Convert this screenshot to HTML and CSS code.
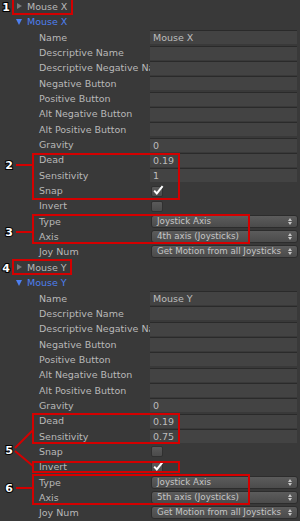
FILE: index.html
```html
<html lang="en">
<head>
    <meta charset="UTF-8">
    <meta name="viewport" content="width=device-width, initial-scale=1.0">
    <title>Input Manager</title>
    <link rel="stylesheet" href="styles.css">
</head>
<body>
    <div class="inspector">
        <!-- Mouse X -->
        <div class="row foldout"><span class="arrow closed"></span>Mouse X</div>
        <div class="row foldout open"><span class="arrow down"></span>Mouse X</div>
        <div class="row"><span class="label">Name</span><span class="field">Mouse X</span></div>
        <div class="row"><span class="label">Descriptive Name</span><span class="field"></span></div>
        <div class="row"><span class="label">Descriptive Negative Name</span><span class="field"></span></div>
        <div class="row"><span class="label">Negative Button</span><span class="field"></span></div>
        <div class="row"><span class="label">Positive Button</span><span class="field"></span></div>
        <div class="row"><span class="label">Alt Negative Button</span><span class="field"></span></div>
        <div class="row"><span class="label">Alt Positive Button</span><span class="field"></span></div>
        <div class="row"><span class="label">Gravity</span><span class="field">0</span></div>
        <div class="row"><span class="label">Dead</span><span class="field">0.19</span></div>
        <div class="row"><span class="label">Sensitivity</span><span class="field">1</span></div>
        <div class="row"><span class="label">Snap</span><span class="check on"><svg viewBox="0 0 12 11" width="12" height="11"><path d="M2.2 5.6 L4.8 8.4 L10.6 1.2" fill="none" stroke="#fff" stroke-width="2"/></svg></span></div>
        <div class="row"><span class="label">Invert</span><span class="check"></span></div>
        <div class="row"><span class="label">Type</span><span class="popup">Joystick Axis<svg class="updown" viewBox="0 0 4 7" width="4" height="7"><path d="M0 3 L2 0 L4 3 Z M0 4 L2 7 L4 4 Z" fill="#c8c8c8"/></svg></span></div>
        <div class="row"><span class="label">Axis</span><span class="popup">4th axis (Joysticks)<svg class="updown" viewBox="0 0 4 7" width="4" height="7"><path d="M0 3 L2 0 L4 3 Z M0 4 L2 7 L4 4 Z" fill="#c8c8c8"/></svg></span></div>
        <div class="row"><span class="label">Joy Num</span><span class="popup">Get Motion from all Joysticks<svg class="updown" viewBox="0 0 4 7" width="4" height="7"><path d="M0 3 L2 0 L4 3 Z M0 4 L2 7 L4 4 Z" fill="#c8c8c8"/></svg></span></div>

        <!-- Mouse Y -->
        <div class="row foldout"><span class="arrow closed"></span>Mouse Y</div>
        <div class="row foldout open"><span class="arrow down"></span>Mouse Y</div>
        <div class="row"><span class="label">Name</span><span class="field">Mouse Y</span></div>
        <div class="row"><span class="label">Descriptive Name</span><span class="field"></span></div>
        <div class="row"><span class="label">Descriptive Negative Name</span><span class="field"></span></div>
        <div class="row"><span class="label">Negative Button</span><span class="field"></span></div>
        <div class="row"><span class="label">Positive Button</span><span class="field"></span></div>
        <div class="row"><span class="label">Alt Negative Button</span><span class="field"></span></div>
        <div class="row"><span class="label">Alt Positive Button</span><span class="field"></span></div>
        <div class="row"><span class="label">Gravity</span><span class="field">0</span></div>
        <div class="row"><span class="label">Dead</span><span class="field">0.19</span></div>
        <div class="row"><span class="label">Sensitivity</span><span class="field">0.75</span></div>
        <div class="row"><span class="label">Snap</span><span class="check"></span></div>
        <div class="row"><span class="label">Invert</span><span class="check on"><svg viewBox="0 0 12 11" width="12" height="11"><path d="M2.2 5.6 L4.8 8.4 L10.6 1.2" fill="none" stroke="#fff" stroke-width="2"/></svg></span></div>
        <div class="row"><span class="label">Type</span><span class="popup">Joystick Axis<svg class="updown" viewBox="0 0 4 7" width="4" height="7"><path d="M0 3 L2 0 L4 3 Z M0 4 L2 7 L4 4 Z" fill="#c8c8c8"/></svg></span></div>
        <div class="row"><span class="label">Axis</span><span class="popup">5th axis (Joysticks)<svg class="updown" viewBox="0 0 4 7" width="4" height="7"><path d="M0 3 L2 0 L4 3 Z M0 4 L2 7 L4 4 Z" fill="#c8c8c8"/></svg></span></div>
        <div class="row"><span class="label">Joy Num</span><span class="popup">Get Motion from all Joysticks<svg class="updown" viewBox="0 0 4 7" width="4" height="7"><path d="M0 3 L2 0 L4 3 Z M0 4 L2 7 L4 4 Z" fill="#c8c8c8"/></svg></span></div>
    </div>

    <!-- red callouts drawn over the inspector -->
    <svg class="callouts" viewBox="0 0 300 521" width="300" height="521">
        <g fill="none" stroke="#d40000" stroke-width="2">
            <rect x="13" y="-1" width="59" height="15"/>
            <rect x="33" y="154" width="146" height="45"/>
            <rect x="33" y="215" width="216" height="28"/>
            <rect x="13" y="260" width="58" height="14"/>
            <rect x="33" y="414" width="146" height="29"/>
            <rect x="33" y="462" width="146" height="10"/>
            <rect x="33" y="475" width="216" height="29"/>
            <line x1="16" y1="165" x2="33" y2="165"/>
            <line x1="16" y1="232" x2="33" y2="232"/>
            <line x1="15" y1="448" x2="33" y2="430"/>
            <line x1="15" y1="451" x2="33" y2="466"/>
            <line x1="16" y1="488" x2="33" y2="488"/>
        </g>
        <g class="num">
            <text x="6" y="11">1</text>
            <text x="9" y="169">2</text>
            <text x="9" y="236">3</text>
            <text x="6" y="272">4</text>
            <text x="9" y="454">5</text>
            <text x="9" y="492">6</text>
        </g>
    </svg>
</body>
</html>
```
FILE: styles.css
```css
/* Global Styles */
body {
    margin: 0;
    padding: 0;
    width: 300px;
    height: 521px;
    overflow: hidden;
    position: relative;
    background-color: #393939;
    font-family: "DejaVu Sans", Verdana, sans-serif;
    font-size: 9.5px;
    color: #b8b8b8;
}

/* Inspector rows */
.inspector {
    display: flex;
    flex-direction: column;
    margin-top: -1.2px;
}

.row {
    height: 15.35px;
    display: flex;
    align-items: center;
    white-space: nowrap;
}

.foldout {
    padding-left: 16px;
    color: #b8b8b8;
}

.foldout.open {
    color: #4d7ff0;
}

.arrow {
    width: 0;
    height: 0;
    margin-right: 5px;
}

.arrow.closed {
    margin-left: 1px;
    border-top: 3px solid transparent;
    border-bottom: 3px solid transparent;
    border-left: 5px solid #7a7a7a;
}

.arrow.down {
    border-left: 3px solid transparent;
    border-right: 3px solid transparent;
    border-top: 6px solid #4d7ff0;
}

.label {
    width: 111px;
    padding-left: 39px;
    overflow: hidden;
}

/* Text fields */
.field {
    width: 144px;
    height: 13px;
    line-height: 13px;
    padding-left: 3px;
    background-color: #434343;
    border-top: 1px solid #2a2a2a;
    color: #bdbdbd;
}

/* Toggles */
.check {
    width: 10px;
    height: 9px;
    margin-left: 1px;
    margin-top: 1px;
    border: 1px solid #303030;
    border-radius: 2px;
    background: linear-gradient(#5a5a5a, #4b4b4b);
    position: relative;
}

.check svg {
    position: absolute;
    left: 0;
    top: -2px;
}

/* Popups */
.popup {
    width: 137px;
    height: 11px;
    line-height: 11px;
    margin-left: 1px;
    padding-left: 5px;
    padding-right: 3px;
    border: 1px solid #2c2c2c;
    border-radius: 3px;
    background: linear-gradient(#5c5c5c, #4b4b4b);
    color: #c6c6c6;
    font-size: 8.7px;
    display: flex;
    align-items: center;
    justify-content: space-between;
}

.updown {
    margin-right: 2px;
}

/* Callouts */
.callouts {
    position: absolute;
    left: 0;
    top: 0;
    pointer-events: none;
}

.num text {
    font-family: "DejaVu Sans", sans-serif;
    font-weight: bold;
    font-size: 11px;
    fill: #fff;
    stroke: #000;
    stroke-width: 2px;
    paint-order: stroke;
    text-anchor: middle;
}
```
